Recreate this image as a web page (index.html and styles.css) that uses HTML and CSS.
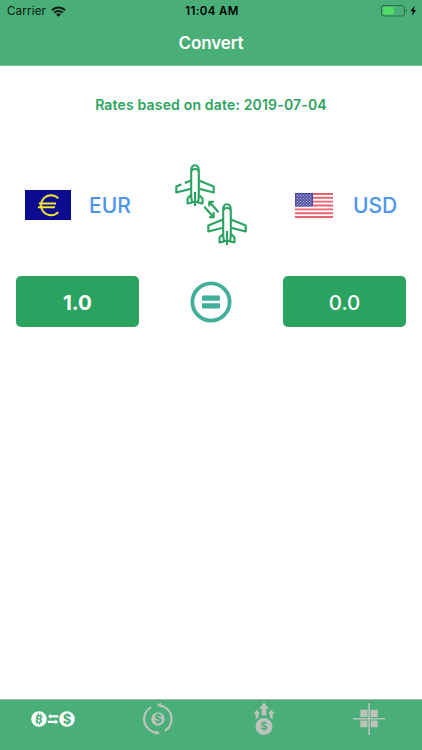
FILE: index.html
```
<!DOCTYPE html>
<html lang="en">
  <head>
    <meta charset="UTF-8" />
    <meta name="viewport" content="width=device-width, initial-scale=1.0" />
    <title>Convert</title>
    <link rel="stylesheet" href="styles.css">
  </head>
  <body>
    <header>
      <!-- Status bar -->
      <div class="status-bar">
        <div class="carrier">
          <span>Carrier</span>
          <svg width="15" height="11" viewBox="0 0 15 11">
            <g fill="none" stroke="#06180e" stroke-width="2">
              <path d="M1 4.2a9.3 9.3 0 0 1 13 0" />
              <path d="M3.3 6.7a6 6 0 0 1 8.4 0" />
            </g>
            <path d="M5.2 8.4a3.3 3.3 0 0 1 4.6 0L7.5 10.7z" fill="#06180e" />
          </svg>
        </div>
        <div class="time">11:04 AM</div>
        <div class="battery">
          <svg width="36" height="12" viewBox="0 0 36 12">
            <rect x=".5" y=".5" width="23" height="10.5" rx="2.5" fill="none" stroke="#2b724b" />
            <rect x="2" y="2" width="11" height="7.5" rx="1" fill="#50dc64" />
            <path d="M24.8 4v3.6q1.2-.5 1.2-1.8T24.8 4z" fill="#2b724b" />
            <path d="M33.5 .8L29.5 6.3h2.4l-.9 4.5 4.2-5.8h-2.6z" fill="#000" />
          </svg>
        </div>
      </div>
      <h1>Convert</h1>
    </header>

    <main>
      <p class="rate-date">Rates based on date: 2019-07-04</p>

      <!-- Currencies -->
      <div class="currencies">
        <div class="currency">
          <svg width="46" height="30" viewBox="0 0 46 30">
            <rect width="46" height="30" fill="#0b0b92" />
            <g fill="none" stroke="#f4e72c" stroke-width="1.9">
              <path d="M33.3 8.4A10 10 0 1 0 33.3 22.2" />
              <path d="M13.8 13.5H31M13 17.3H30" />
            </g>
          </svg>
          <span>EUR</span>
        </div>

        <svg class="planes" width="74" height="84" viewBox="0 0 74 84">
          <defs>
            <g id="plane">
              <path d="M17.2 33V8Q17.2 2.2 21 2.2T24.8 8V33" />
              <path d="M17.5 8.3Q18 6 21 6T24.5 8.3" />
              <path d="M25 17.5L39.7 23.5V29.5L25 25.8" />
              <path d="M17 32L13.5 35.5V40.5L18 39.5L17 32M25 32L28.5 35.5V40.5L24 39.5L25 32M18 39H24M21 29V43" />
            </g>
          </defs>
          <g fill="none" stroke="#2ba360" stroke-width="2.1" stroke-linejoin="round">
            <use href="#plane" />
            <path d="M17 25.8L2.3 29.5V23.5L7.5 21.2M10.8 19.9L17 17.5" />
            <use href="#plane" x="32" y="39" />
            <path d="M49 64.8L34.3 68.5V62.5L49 56.5" />
            <path d="M30.3 43.7L39.7 54.3M35 54.3H39.7V49" />
            <path d="M44.5 49.2L35.3 38.7M35.3 43.5V38.7H40" />
          </g>
        </svg>

        <div class="currency currency-to">
          <svg width="38" height="25" viewBox="0 0 38 25">
            <defs>
              <pattern id="stars" width="3" height="3" patternUnits="userSpaceOnUse">
                <circle cx=".8" cy=".8" r=".6" fill="#dcdcf2" />
                <circle cx="2.3" cy="2.3" r=".6" fill="#dcdcf2" />
              </pattern>
            </defs>
            <rect width="38" height="25" fill="#fff" />
            <path d="M0 .96H38M0 4.81H38M0 8.65H38M0 12.5H38M0 16.35H38M0 20.19H38M0 24.04H38" stroke="#ea626b" stroke-width="1.92" />
            <rect width="18" height="13.46" fill="#4b4ba0" />
            <rect x="1" y="1" width="16" height="11.5" fill="url(#stars)" />
          </svg>
          <span>USD</span>
        </div>
      </div>

      <!-- Amounts -->
      <div class="amounts">
        <div class="amount amount-from">1.0</div>
        <svg width="42" height="42" viewBox="0 0 42 42">
          <circle cx="21" cy="21" r="18.6" fill="none" stroke="#41ae99" stroke-width="3.8" />
          <g fill="#41ae99">
            <rect x="12" y="14.5" width="18" height="5.2" rx=".7" />
            <rect x="12" y="22.3" width="18" height="5.2" rx=".7" />
          </g>
        </svg>
        <div class="amount">0.0</div>
      </div>
    </main>

    <!-- Tab bar -->
    <nav>
      <a class="tab active">
        <svg width="44" height="34" viewBox="0 0 44 34">
          <g fill="currentColor">
            <circle cx="8" cy="17" r="7.8" />
            <circle cx="36" cy="17" r="7.8" />
            <path d="M17 14.3l3-2.5v1.4h7.4v2.4h-7.4v1.4zM27.2 19.9l-3 2.6v-1.4h-7.4v-2.4h7.4v-1.4z" />
          </g>
          <g class="coin">
            <text x="8" y="21" font-size="11" transform="rotate(8 8 17)">B</text>
            <path d="M7.7 11.3l-.3 2M10 11.6l-.3 2M6.3 20.4l-.3 2M8.6 20.7l-.3 2" stroke="#49ae78" />
            <text x="36" y="21.7" font-size="13">$</text>
          </g>
        </svg>
      </a>
      <a class="tab">
        <svg width="32" height="34" viewBox="0 0 32 34">
          <g fill="none" stroke="currentColor" stroke-width="2.2">
            <path d="M9 5.1A13.8 13.8 0 0 0 14.8 30.8" />
            <path d="M17.5 3.3A13.8 13.8 0 0 1 23 28.8" />
          </g>
          <path d="M14.6 2.9l4.5-2.4v4.9zM18.2 31l-4.4-2.7v5z" fill="currentColor" />
          <circle cx="16" cy="17" r="6.7" fill="currentColor" />
          <g class="coin"><text x="16" y="21.1" font-size="11.5">$</text></g>
        </svg>
      </a>
      <a class="tab">
        <svg width="24" height="34" viewBox="0 0 24 34">
          <g fill="currentColor">
            <circle cx="12" cy="24.5" r="8.5" />
            <path d="M12 .5l4.8 6.2h-2.5v7q-2.3-.8-4.6 0v-7H7.2z" />
            <path d="M4.8 7.5L8.2 12H6.5v3.4L3.6 17.2V12H1.6zM19.3 7.5L16 12h1.8v3.4l2.8 1.8V12h2z" />
          </g>
          <g class="coin"><text x="12" y="28.4" font-size="10.5">$</text></g>
        </svg>
      </a>
      <a class="tab">
        <svg width="32" height="34" viewBox="0 0 32 34">
          <g fill="currentColor">
            <path d="M7.3 7.8h7.2v7.2H7.3zM17.7 7.8h7v7.2h-7zM7.3 18.4h7.2v6.9H7.3zM17.7 18.4h7v6.9h-7z" />
            <path d="M15.3 1h1.6v32h-1.6zM0 16h32v1.5H0z" />
          </g>
        </svg>
      </a>
    </nav>
  </body>
</html>
```

FILE: styles.css
```
* {
  box-sizing: border-box;
}

body {
  font-family: Inter, "Liberation Sans", sans-serif;
  background-color: white;
  margin: 0;
  height: 100vh;
  display: flex;
  flex-direction: column;
}

svg {
  display: block;
  flex-shrink: 0;
}

header {
  height: 66px;
  background-color: #49ae78;
  border-bottom: 1px solid #7fbd9b;
}

/* Status bar */
.status-bar {
  display: grid;
  grid-template-columns: 1fr auto 1fr;
  align-items: center;
  height: 22px;
  padding: 0 5px 0 7px;
  font-size: 11.5px;
  color: #06180e;
}

.carrier {
  display: flex;
  align-items: center;
  gap: 5px;
  letter-spacing: 0.2px;
}

.time {
  font-weight: 600;
  letter-spacing: 0.4px;
  color: #000;
}

.battery {
  display: flex;
  justify-content: flex-end;
}

h1 {
  margin: 0;
  font-size: 17px;
  line-height: 43px;
  font-weight: 600;
  letter-spacing: -0.1px;
  text-align: center;
  color: white;
}

main {
  flex: 1;
}

.rate-date {
  margin: 28px 0 0;
  font-size: 14px;
  line-height: 21px;
  font-weight: 600;
  letter-spacing: 0.17px;
  text-align: center;
  color: #2ba360;
}

.currencies {
  display: grid;
  grid-template-columns: 149px 74px 1fr;
  margin-top: 48px;
  padding-left: 25px;
}

.currency {
  display: flex;
  align-items: center;
  gap: 18px;
  height: 84px;
  font-size: 21px;
  font-weight: 500;
  color: #4c94ee;
}

.currency-to {
  gap: 20px;
  padding-left: 47px;
}

/* Amounts */
.amounts {
  display: flex;
  justify-content: space-between;
  align-items: center;
  margin-top: 29px;
  padding: 0 16px;
}

.amount {
  width: 123px;
  height: 51px;
  border-radius: 5px;
  background-color: #2ba360;
  font-size: 20.5px;
  line-height: 53px;
  font-weight: 500;
  text-align: center;
  color: white;
}

.amount-from {
  font-weight: 700;
}

/* Tab bar */
nav {
  display: grid;
  grid-template-columns: repeat(4, 1fr);
  height: 51px;
  padding-top: 2px;
  background-color: #49ae78;
  border-top: 1px solid #a8b5ad;
}

.tab {
  display: flex;
  justify-content: center;
  color: #bdc2bd;
}

.tab.active {
  color: white;
}

.coin text {
  font-weight: 700;
  text-anchor: middle;
  fill: #49ae78;
}
```
